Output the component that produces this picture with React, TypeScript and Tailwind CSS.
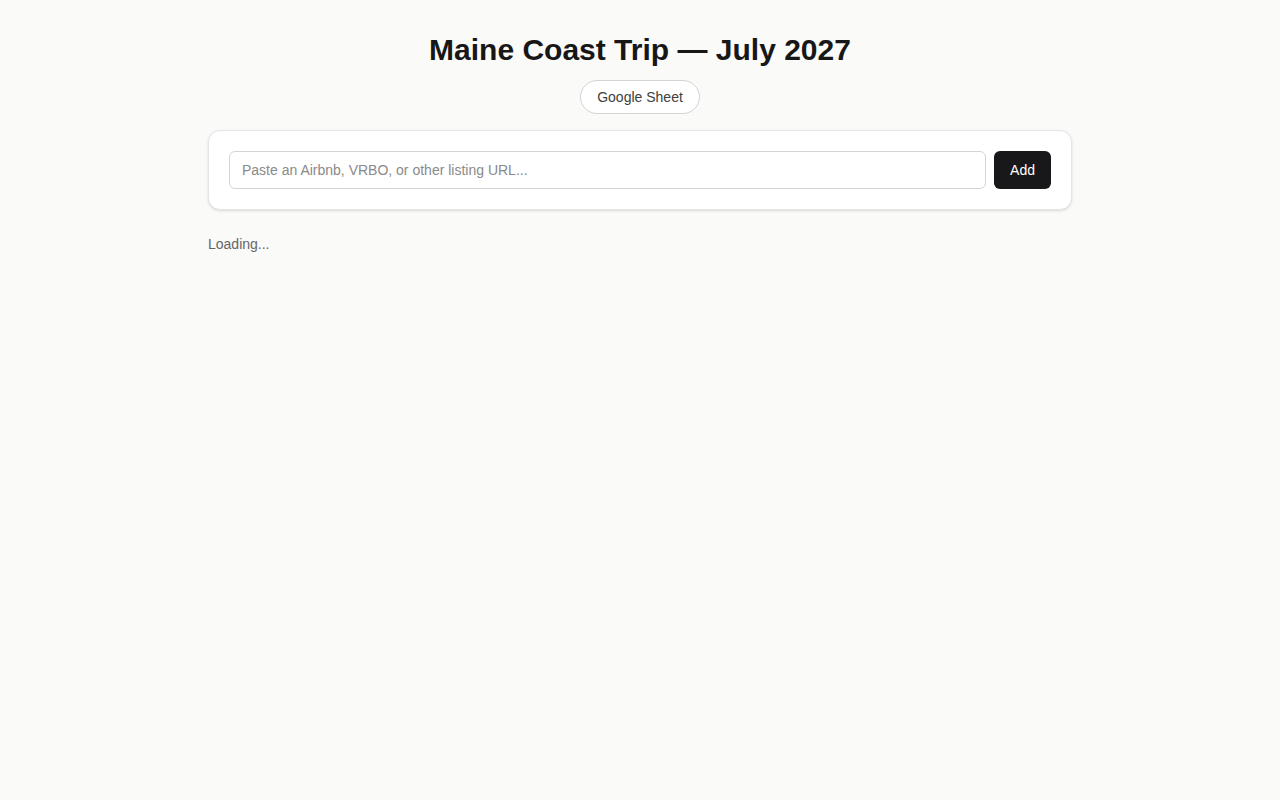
export default function App() {
  return (
    <div
      className="min-h-screen bg-[#fafaf9] text-[#171717]"
      style={{ fontFamily: '"Liberation Sans", Arial, sans-serif' }}
    >
      <main className="mx-auto max-w-4xl px-4 py-8">
        <header className="flex flex-col items-center gap-3">
          <h1 className="text-[30px] font-bold leading-9">
            Maine Coast Trip — July 2027
          </h1>
          <a
            href="#"
            className="rounded-full border border-[#d4d4d4] bg-white px-4 py-1.5 text-sm leading-5 text-[#404040]"
          >
            Google Sheet
          </a>
        </header>

        <form
          className="mt-4 flex gap-2 rounded-xl border border-[#e5e5e5] bg-white p-5 shadow-sm"
          onSubmit={(e) => e.preventDefault()}
        >
          <input
            type="text"
            placeholder="Paste an Airbnb, VRBO, or other listing URL..."
            className="flex-1 rounded-md border border-[#d4d4d4] px-3 py-2 text-sm leading-5 placeholder:text-[#8a8a8a] outline-none"
          />
          <button
            type="submit"
            className="rounded-md bg-[#18181b] px-4 py-2 text-sm leading-5 text-white"
          >
            Add
          </button>
        </form>

        <p className="mt-6 text-sm leading-5 text-[#666]">Loading...</p>
      </main>
    </div>
  );
}
